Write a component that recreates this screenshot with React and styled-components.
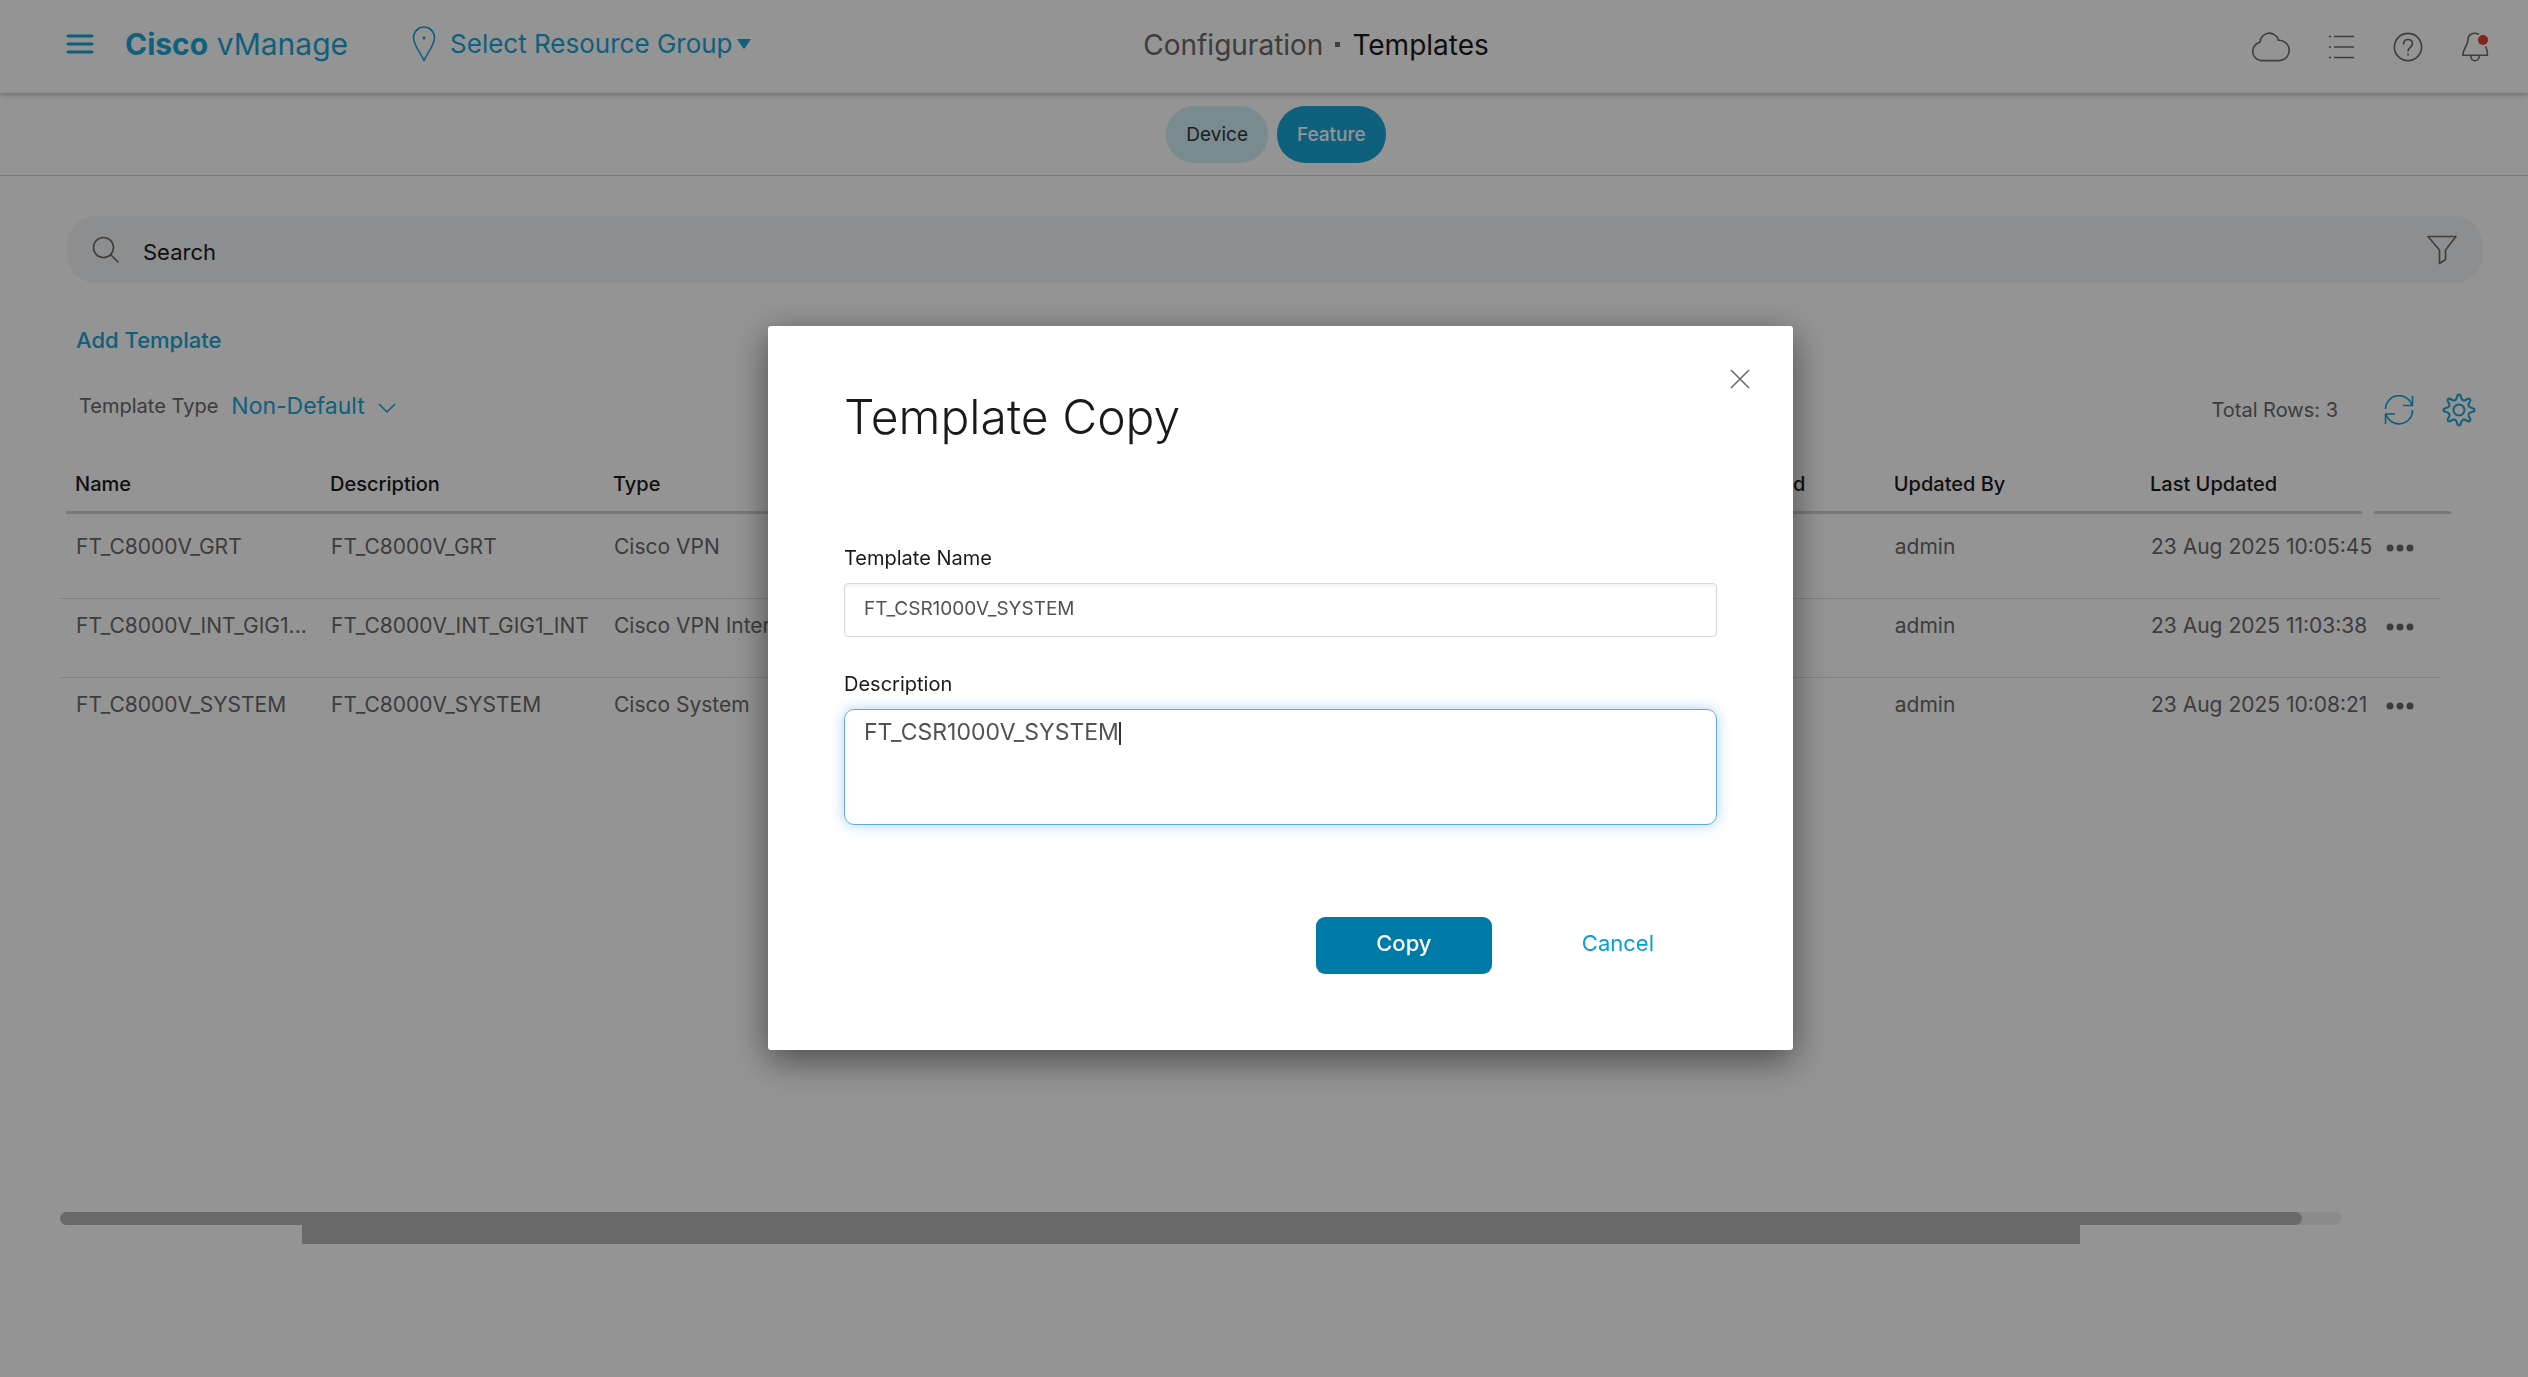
import React, { useEffect, useRef, useState } from 'react';
import styled, { createGlobalStyle } from 'styled-components';

const colors = {
	brand: '#1aa5d8',
	link: '#049fd9',
	button: '#007aa6',
	ink: '#1a1a1a',
	text: '#696969',
	icon: '#6a6a6a',
	line: '#e0e0e0',
	bar: '#b5b5b5',
};

const columns = [
	{ label: 'Name', width: 255 },
	{ label: 'Description', width: 283 },
	{ label: 'Type' },
	{ label: 'Device Model' },
	{ label: 'Device Templates' },
	{ label: 'Resource Group' },
	{ label: 'Devices Attached' },
	{ label: 'Updated By' },
	{ label: 'Last Updated', width: 233 },
];

const rows = [
	['FT_C8000V_GRT', 'FT_C8000V_GRT', 'Cisco VPN', '', '', '', '', 'admin', '23 Aug 2025 10:05:45'],
	['FT_C8000V_INT_GIG1_INT', 'FT_C8000V_INT_GIG1_INT', 'Cisco VPN Interface', '', '', '', '', 'admin', '23 Aug 2025 11:03:38'],
	['FT_C8000V_SYSTEM', 'FT_C8000V_SYSTEM', 'Cisco System', '', '', '', '', 'admin', '23 Aug 2025 10:08:21'],
];

const NAME_LIMIT = 18;

const shorten = (name) => (name.length > NAME_LIMIT ? `${name.slice(0, NAME_LIMIT)}...` : name);

// Eight rounded teeth around the centre of a 34px box
const gearPath = () => {
	const point = (deg, r) => {
		const a = (deg * Math.PI) / 180;
		return `${(17 + r * Math.cos(a)).toFixed(2)} ${(17 + r * Math.sin(a)).toFixed(2)}`;
	};
	let d = '';
	for (let i = 0; i < 8; i += 1) {
		const mid = i * 45 - 90;
		d += `${i ? 'L' : 'M'}${point(mid - 5, 15)}`;
		d += `Q${point(mid, 16)} ${point(mid + 5, 15)}`;
		d += `L${point(mid + 13, 11.5)}`;
		d += `Q${point(mid + 22.5, 9.6)} ${point(mid + 32, 11.5)}`;
	}
	return `${d}Z`;
};

const Icon = ({ width, height, children, stroke = 1.6 }) => (
	<svg
		width={width}
		height={height}
		viewBox={`0 0 ${width} ${height}`}
		fill="none"
		stroke="currentColor"
		strokeWidth={stroke}
		strokeLinejoin="round"
		aria-hidden="true"
	>
		{children}
	</svg>
);

const TopBar = () => (
	<Header>
		<Left>
			<IconButton aria-label="Menu" $color={colors.brand}>
				<Icon width={28} height={20} stroke={3}>
					<path strokeLinecap="round" d="M2 2H26M2 10H26M2 18H26" />
				</Icon>
			</IconButton>
			<Brand href="#home">
				<strong>Cisco</strong> vManage
			</Brand>
			<ResourceGroup>
				<Icon width={24} height={36}>
					<path d="M12 34.5C8 26 1.5 19 1.5 11.5A10.2 10.2 0 0 1 22.5 11.5C22.5 19 16 26 12 34.5Z" />
					<circle cx="12" cy="12" r="1.5" fill="currentColor" stroke="none" />
				</Icon>
				<span>Select Resource Group</span>
				<svg width="14" height="10" viewBox="0 0 14 10" aria-hidden="true">
					<path fill="currentColor" d="M0 0H14L8 9Q7 10 6 9Z" />
				</svg>
			</ResourceGroup>
		</Left>
		<Title>
			<span>Configuration</span>
			<i />
			<strong>Templates</strong>
		</Title>
		<Actions>
			<IconButton aria-label="Cloud">
				<Icon width={40} height={30}>
					<path d="M10 28.6A9.3 9.3 0 0 1 9 10.3A9.4 9.4 0 0 1 27.5 8.2A10.2 10.2 0 0 1 28.5 28.6Z" />
				</Icon>
			</IconButton>
			<IconButton aria-label="Tasks">
				<Icon width={26} height={24}>
					<path d="M0 1.5H2M0 12H2M0 22.5H2M5 1.5H25M5 12H25M5 22.5H25" />
				</Icon>
			</IconButton>
			<IconButton aria-label="Help">
				<Icon width={30} height={30}>
					<circle cx="15" cy="15" r="13.6" />
					<path d="M10.5 12.5C10.5 9 12.5 7.5 15 7.5S19.5 9 19.5 11.8C19.5 15 15 15.5 15 19.5M15 21.5V23.5" />
				</Icon>
			</IconButton>
			<IconButton aria-label="Notifications">
				<Icon width={28} height={30}>
					<path d="M18 2.2C11.5 -0.5 7 3 7 7.5C7 14 2 16 1.8 23.3H26.5C26.5 19 26 17 24.5 14.3" />
					<path d="M9.8 24C9.8 30.3 18.2 30.3 18.2 24" />
					<circle cx="22" cy="8" r="5" fill="#e23f24" stroke="none" />
				</Icon>
			</IconButton>
		</Actions>
	</Header>
);

const TemplateTable = () => (
	<Table>
		<colgroup>
			{columns.map(({ label, width }) => (
				<col key={label} width={width} />
			))}
			<col width="71" />
		</colgroup>
		<thead>
			<tr>
				{columns.map(({ label }) => (
					<th key={label} scope="col">
						<HeadLabel>{label}</HeadLabel>
					</th>
				))}
				<th aria-label="Actions">
					<HeadLabel>&nbsp;</HeadLabel>
				</th>
			</tr>
		</thead>
		<tbody>
			{rows.map(([name, ...cells]) => (
				<tr key={name}>
					<Cell title={name}>{shorten(name)}</Cell>
					{cells.map((cell, i) => (
						<Cell key={columns[i + 1].label}>{cell}</Cell>
					))}
					<Cell>
						<IconButton aria-label={`More actions for ${name}`}>
							<svg width="28" height="10" viewBox="0 0 28 10" fill="currentColor" aria-hidden="true">
								<circle cx="4" cy="5" r="3.5" />
								<circle cx="14" cy="5" r="3.5" />
								<circle cx="24" cy="5" r="3.5" />
							</svg>
						</IconButton>
					</Cell>
				</tr>
			))}
		</tbody>
	</Table>
);

const CopyDialog = () => {
	const field = useRef(null);
	const [description, setDescription] = useState('FT_CSR1000V_SYSTEM');
	const [caret, setCaret] = useState(0);

	useEffect(() => {
		field.current.focus();
		field.current.setSelectionRange(description.length, description.length);
	}, []);

	// The caret bar sits right after the last typed character
	useEffect(() => {
		const { fontSize, fontFamily, paddingLeft } = getComputedStyle(field.current);
		const ctx = document.createElement('canvas').getContext('2d');
		ctx.font = `${fontSize} ${fontFamily}`;
		setCaret(Math.round(parseInt(paddingLeft, 10) + ctx.measureText(description).width) + 1);
	}, [description]);

	return (
		<Backdrop>
			<Dialog role="dialog" aria-modal="true" aria-labelledby="dialog-title">
				<Close>
					<IconButton aria-label="Close">
						<Icon width={20} height={20}>
							<path d="M1 1L19 19M19 1L1 19" />
						</Icon>
					</IconButton>
				</Close>
				<DialogTitle id="dialog-title">Template Copy</DialogTitle>
				<Label htmlFor="template-name">Template Name</Label>
				<NameInput id="template-name" defaultValue="FT_CSR1000V_SYSTEM" />
				<Label htmlFor="description">Description</Label>
				<DescriptionField>
					<textarea
						id="description"
						ref={field}
						spellCheck={false}
						value={description}
						onChange={(e) => setDescription(e.target.value)}
					/>
					<Caret style={{ left: caret }} />
				</DescriptionField>
				<Footer>
					<CopyButton type="button">Copy</CopyButton>
					<CancelButton type="button">Cancel</CancelButton>
				</Footer>
			</Dialog>
		</Backdrop>
	);
};

const App = () => (
	<>
		<GlobalStyle />
		<Page>
			<TopBar />
			<Tabs>
				<Tab type="button">Device</Tab>
				<Tab type="button" $active>
					Feature
				</Tab>
			</Tabs>
			<Main>
				<SearchBar>
					<Icon width={28} height={28}>
						<circle cx="11.5" cy="11.5" r="10" />
						<path d="M18.5 18.5L26.5 26.5" />
					</Icon>
					<input type="search" aria-label="Search" placeholder="Search" />
					<IconButton aria-label="Filter">
						<Icon width={30} height={30}>
							<path d="M1 1.5H29L18.5 15V24.5L12.5 28.5V15Z" />
						</Icon>
					</IconButton>
				</SearchBar>
				<AddTemplate href="#add">Add Template</AddTemplate>
				<Toolbar>
					<TypeFilter>
						<label htmlFor="template-type">Template Type</label>
						<select id="template-type" defaultValue="Non-Default">
							<option>Non-Default</option>
						</select>
						<Icon width={18} height={10}>
							<path d="M1 1L9 9L17 1" />
						</Icon>
					</TypeFilter>
					<TotalRows>Total Rows: 3</TotalRows>
					<IconButton aria-label="Refresh" $color={colors.brand}>
						<Icon width={30} height={30}>
							<path d="M1.5 14A13.5 13.5 0 0 1 28 10.5M28.5 1V10.5H19" />
							<path d="M28.5 15A13.5 13.5 0 0 1 2 19M1.5 29V19H11" />
						</Icon>
					</IconButton>
					<IconButton aria-label="Settings" $color={colors.brand}>
						<Icon width={34} height={34} stroke={2}>
							<path d={gearPath()} />
							<circle cx="17" cy="17" r="5.5" />
						</Icon>
					</IconButton>
				</Toolbar>
				<TableArea>
					<TemplateTable />
				</TableArea>
				<ScrollTrack>
					<ScrollThumb />
				</ScrollTrack>
				<PageScroll />
			</Main>
		</Page>
		<CopyDialog />
	</>
);

export default App;

const GlobalStyle = createGlobalStyle`
	* {
		box-sizing: border-box;
	}

	body {
		background: white;
		color: ${colors.text};
		font-family: Inter, "Liberation Sans", sans-serif;
		font-size: 20px;
		margin: 0;
	}

	button,
	input,
	select,
	textarea {
		background: none;
		border: 0;
		color: inherit;
		font: inherit;
		padding: 0;
	}

	a {
		text-decoration: none;
	}

	svg {
		display: block;
		flex: none;
	}
`;

const Page = styled.div`
	min-height: 100vh;
`;

const Header = styled.header`
	align-items: center;
	box-shadow: 0 1px 6px rgba(0, 0, 0, 0.32);
	display: grid;
	grid-template-columns: 1fr auto 1fr;
	height: 93px;
	padding: 0 39px 0 66px;
	position: relative;
`;

const Left = styled.div`
	align-items: center;
	color: ${colors.brand};
	display: flex;
	padding-bottom: 6px;
`;

const IconButton = styled.button`
	color: ${({ $color }) => $color || colors.icon};
	display: flex;
`;

const Brand = styled.a`
	color: inherit;
	font-size: 30px;
	line-height: 36px;
	margin-left: 31px;
`;

const ResourceGroup = styled.button`
	align-items: center;
	display: flex;
	font-size: 26px;
	line-height: 36px;
	margin-left: 64px;

	span {
		margin: 0 4px 0 14px;
	}
`;

const Title = styled.h1`
	align-items: center;
	display: flex;
	font-size: 28px;
	font-weight: 400;
	gap: 12px;
	line-height: 36px;
	margin: 0;
	padding: 0 0 4px 77px;

	i {
		background: ${colors.text};
		height: 5px;
		width: 5px;
	}

	strong {
		color: ${colors.ink};
		font-weight: 400;
	}
`;

const Actions = styled.div`
	align-items: center;
	display: flex;
	gap: 38px;
	justify-content: flex-end;
`;

const Tabs = styled.nav`
	align-items: center;
	border-bottom: 1px solid #d4d4d4;
	display: flex;
	gap: 9px;
	height: 83px;
	justify-content: center;
	padding: 0 0 0 24px;
`;

const Tab = styled.button`
	background: ${({ $active }) => ($active ? colors.brand : '#d3eff6')};
	border-radius: 28px;
	color: ${({ $active }) => ($active ? 'white' : '#333')};
	font-size: 19px;
	font-weight: ${({ $active }) => ($active ? 500 : 400)};
	height: 57px;
	padding: 0 20px;
`;

const Main = styled.main`
	padding: 40px 45px 40px 60px;
`;

const SearchBar = styled.div`
	align-items: center;
	background: #f3f5f6;
	border-radius: 28px;
	color: ${colors.icon};
	display: flex;
	height: 67px;
	margin-left: 7px;
	padding: 0 26px 0 25px;

	input {
		color: ${colors.ink};
		flex: 1;
		font-size: 22px;
		line-height: 28px;
		margin-left: 23px;
		min-width: 0;
		outline: none;
		padding-top: 4px;
	}

	input::placeholder {
		color: ${colors.ink};
		opacity: 1;
	}
`;

const AddTemplate = styled.a`
	color: ${colors.brand};
	display: block;
	font-size: 22px;
	font-weight: 500;
	line-height: 28px;
	margin: 43px 0 0 16px;
	width: max-content;
`;

const Toolbar = styled.div`
	align-items: center;
	display: flex;
	height: 34px;
	margin: 39px 7px 0 19px;

	button {
		margin-left: 28px;
	}
`;

const TypeFilter = styled.div`
	align-items: center;
	color: ${colors.brand};
	display: flex;
	gap: 13px;
	padding-bottom: 8px;

	label {
		color: ${colors.text};
	}

	select {
		appearance: none;
		font-size: 23px;
		outline: none;
	}

	svg {
		margin-top: 4px;
	}
`;

const TotalRows = styled.span`
	margin: 0 18px 0 auto;
`;

const TableArea = styled.section`
	margin-top: 43px;
	min-height: 742px;
	padding-right: 44px;
`;

const Table = styled.table`
	border-collapse: separate;
	border-spacing: 0;
	table-layout: fixed;
	width: 100%;

	th {
		color: ${colors.ink};
		font-weight: 500;
		padding: 0 0 6px;
		text-align: left;
	}

	th:first-child > span {
		margin-left: 6px;
		padding-left: 9px;
	}

	th:nth-last-child(2) > span {
		margin-right: 6px;
	}

	th:last-child > span {
		margin: 0 -12px 0 6px;
	}

	tr:last-child td {
		border-bottom: 0;
	}
`;

const HeadLabel = styled.span`
	border-bottom: 3px solid #d2d2d2;
	display: block;
	line-height: 28px;
	padding: 0 0 13px 15px;
`;

const Cell = styled.td`
	border-bottom: 1px solid ${colors.line};
	font-size: 21px;
	height: 79px;
	line-height: 26px;
	padding: 14px 0 0 16px;
	vertical-align: top;
	white-space: nowrap;

	button {
		margin: 9px 0 0 2px;
	}
`;

const ScrollTrack = styled.div`
	background: #efefef;
	border-radius: 7px;
	height: 13px;
	margin-right: 141px;
`;

const ScrollThumb = styled.div`
	background: ${colors.bar};
	border-radius: 7px;
	height: 13px;
	margin-right: 40px;
`;

const PageScroll = styled.div`
	background: ${colors.bar};
	height: 19px;
	margin: 0 403px 0 242px;
`;

const Backdrop = styled.div`
	align-items: flex-start;
	background: rgba(0, 0, 0, 0.42);
	display: flex;
	inset: 0;
	justify-content: center;
	padding: 326px 0 0 33px;
	position: fixed;
`;

const Dialog = styled.div`
	background: white;
	border-radius: 3px;
	box-shadow: 0 10px 36px rgba(0, 0, 0, 0.5);
	color: #525252;
	display: flex;
	flex-direction: column;
	max-width: 1025px;
	padding: 43px 76px 76px;
	width: 100%;
`;

const Close = styled.div`
	display: flex;
	justify-content: flex-end;
	margin-right: -33px;
`;

const DialogTitle = styled.h2`
	color: ${colors.ink};
	font-size: 48px;
	font-weight: 300;
	line-height: 56px;
	margin: 0 0 100px;
`;

const Label = styled.label`
	color: ${colors.ink};
	line-height: 26px;
	margin-bottom: 12px;
`;

const NameInput = styled.input`
	border: 1px solid #d8d8d8;
	border-radius: 4px;
	box-shadow: inset 0 2px 3px rgba(0, 0, 0, 0.06);
	font-size: 19px;
	height: 54px;
	margin-bottom: 34px;
	padding: 0 19px 4px;
`;

const DescriptionField = styled.div`
	display: flex;
	position: relative;

	textarea {
		border: 1px solid #5fabe8;
		border-radius: 10px;
		box-shadow: 0 0 14px rgba(95, 171, 232, 0.5);
		caret-color: transparent;
		flex: 1;
		font-size: 23px;
		height: 116px;
		line-height: 28px;
		outline: none;
		padding: 8px 19px;
		resize: none;
	}
`;

const Caret = styled.span`
	background: #333;
	height: 23px;
	pointer-events: none;
	position: absolute;
	top: 13px;
	width: 2px;
`;

const Footer = styled.div`
	display: flex;
	gap: 53px;
	justify-content: flex-end;
	margin-top: 92px;
	padding-right: 26px;
`;

const DialogButton = styled.button`
	border-radius: 9px;
	font-size: 22px;
	height: 57px;
	padding-bottom: 6px;
`;

const CopyButton = styled(DialogButton)`
	background: ${colors.button};
	color: white;
	font-weight: 500;
	width: 176px;
`;

const CancelButton = styled(DialogButton)`
	color: ${colors.link};
	padding: 0 37px 6px;
`;
